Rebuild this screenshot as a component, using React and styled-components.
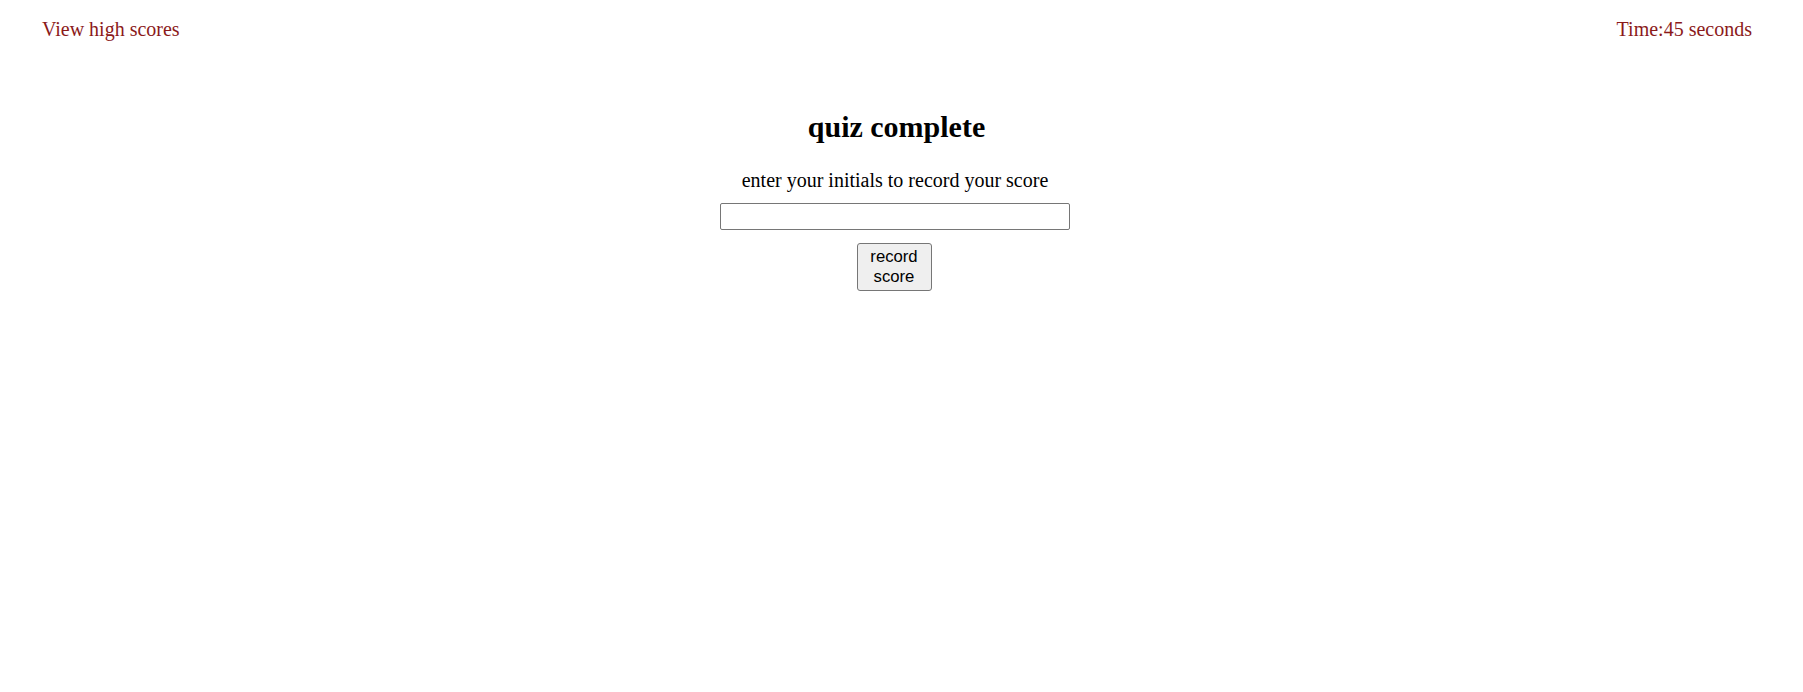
import styled, { createGlobalStyle } from 'styled-components';

const GlobalStyle = createGlobalStyle`
  html, body {
    margin: 0;
    padding: 0;
    background: #ffffff;
  }
  body {
    font-family: "Liberation Serif", "Times New Roman", serif;
    color: #000000;
  }
`;

const Page = styled.div`
  width: 100%;
  min-height: 692px;
`;

const Header = styled.header`
  display: flex;
  justify-content: space-between;
  align-items: center;
  padding: 18px 51px 0 42px;
  font-size: 20px;
  line-height: 23px;
`;

const HeaderText = styled.span`
  color: #8b1a1a;
`;

const Main = styled.main`
  display: flex;
  flex-direction: column;
  align-items: center;
  padding: 0 13px 0 0;
  margin-top: 69px;
`;

const Title = styled.h2`
  margin: 0;
  padding-left: 3px;
  font-size: 30px;
  line-height: 34px;
  font-weight: bold;
`;

const Label = styled.p`
  margin: 25px 0 0;
  font-size: 20px;
  line-height: 23px;
`;

const Input = styled.input`
  box-sizing: border-box;
  margin-top: 11px;
  width: 350px;
  height: 27px;
  border: 1px solid #767676;
  border-radius: 2px;
  padding: 1px 3px;
  font-size: 16px;
`;

const Button = styled.button`
  box-sizing: border-box;
  margin: 13px 2px 0 0;
  width: 75px;
  height: 48px;
  padding: 2px 7px;
  background: #efefef;
  border: 1px solid #767676;
  border-radius: 3px;
  font-family: "Liberation Sans", Arial, sans-serif;
  font-size: 16.7px;
  line-height: 20px;
  color: #000000;
`;

const App = () => {
  return (
    <Page>
      <GlobalStyle />
      <Header>
        <HeaderText>View high scores</HeaderText>
        <HeaderText>Time:45 seconds</HeaderText>
      </Header>
      <Main>
        <Title>quiz complete</Title>
        <Label>enter your initials to record your score</Label>
        <Input type="text" />
        <Button>record score</Button>
      </Main>
    </Page>
  );
};

export default App;
